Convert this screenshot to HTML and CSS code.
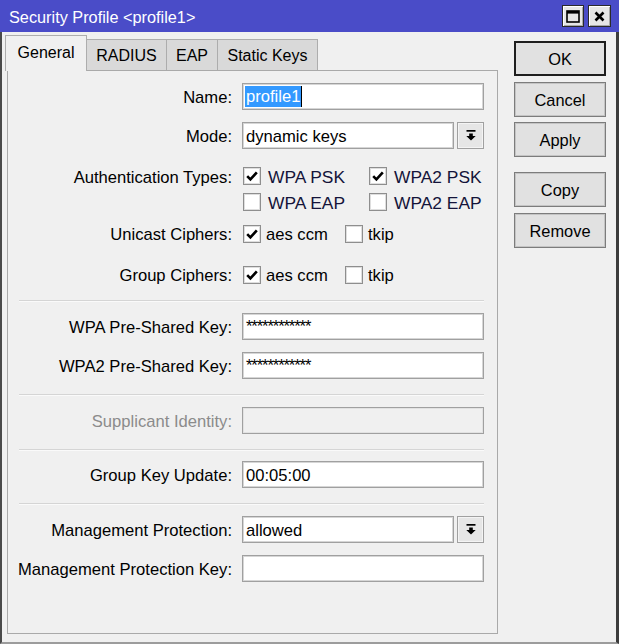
FILE: index.html
```html
<!DOCTYPE html>
<html>
<head>
<meta charset="utf-8">
<link rel="stylesheet" href="styles.css">
</head>
<body>
<div class="window">
  <div class="titlebar">
    <span class="title">Security Profile &lt;profile1&gt;</span>
    <div class="wbtns">
      <span class="wbtn"><svg width="14" height="13" viewBox="0 0 14 13"><rect x="1" y="1" width="12" height="11" fill="none" stroke="#000" stroke-width="1.6"/><rect x="1" y="1" width="12" height="2.6" fill="#000"/></svg></span>
      <span class="wbtn wide"><svg width="11" height="11" viewBox="0 0 11 11"><path d="M1.5 1.5L9.5 9.5M9.5 1.5L1.5 9.5" stroke="#000" stroke-width="2.6" fill="none"/></svg></span>
    </div>
  </div>
  <div class="frame">
    <div class="main">
      <div class="tabs">
        <div class="tab active t-general">General</div>
        <div class="tab t-radius">RADIUS</div>
        <div class="tab t-eap">EAP</div>
        <div class="tab t-static">Static Keys</div>
      </div>
      <div class="panel">
        <div class="row m12">
          <div class="lbl">Name:</div>
          <div class="input name"><span class="sel">profile1</span><span class="caret"></span></div>
        </div>
        <div class="row m12">
          <div class="lbl">Mode:</div>
          <div class="combo">
            <div class="input">dynamic keys</div>
            <div class="drop"><svg width="10" height="11" viewBox="0 0 10 11"><rect x="0.5" y="0" width="9" height="1.7" fill="#000"/><path d="M3.2 3.4h3.6v2.6h2.9L5 10.6 0.3 6h2.9z" fill="#000"/></svg></div>
          </div>
        </div>
        <div class="row auth m14">
          <div class="lbl tall">Authentication Types:</div>
          <div class="checks">
            <div class="crow">
              <div class="citem w1"><span class="cb"><svg width="14" height="14" viewBox="0 0 14 14"><path d="M2.2 7.2L5.4 10.4L11.8 3.4" stroke="#000" stroke-width="2.6" fill="none"/></svg></span><span class="ctext">WPA PSK</span></div>
              <div class="citem"><span class="cb"><svg width="14" height="14" viewBox="0 0 14 14"><path d="M2.2 7.2L5.4 10.4L11.8 3.4" stroke="#000" stroke-width="2.6" fill="none"/></svg></span><span class="ctext">WPA2 PSK</span></div>
            </div>
            <div class="crow">
              <div class="citem w1"><span class="cb"></span><span class="ctext">WPA EAP</span></div>
              <div class="citem"><span class="cb"></span><span class="ctext">WPA2 EAP</span></div>
            </div>
          </div>
        </div>
        <div class="row m5">
          <div class="lbl">Unicast Ciphers:</div>
          <div class="crow">
            <div class="citem w2 tight"><span class="cb"><svg width="14" height="14" viewBox="0 0 14 14"><path d="M2.2 7.2L5.4 10.4L11.8 3.4" stroke="#000" stroke-width="2.6" fill="none"/></svg></span><span class="ctext">aes ccm</span></div>
            <div class="citem tight"><span class="cb"></span><span class="ctext">tkip</span></div>
          </div>
        </div>
        <div class="row m14">
          <div class="lbl">Group Ciphers:</div>
          <div class="crow">
            <div class="citem w2 tight"><span class="cb"><svg width="14" height="14" viewBox="0 0 14 14"><path d="M2.2 7.2L5.4 10.4L11.8 3.4" stroke="#000" stroke-width="2.6" fill="none"/></svg></span><span class="ctext">aes ccm</span></div>
            <div class="citem tight"><span class="cb"></span><span class="ctext">tkip</span></div>
          </div>
        </div>
        <div class="sep m12"></div>
        <div class="row m11">
          <div class="lbl">WPA Pre-Shared Key:</div>
          <div class="input pw">************</div>
        </div>
        <div class="row m12">
          <div class="lbl">WPA2 Pre-Shared Key:</div>
          <div class="input pw">************</div>
        </div>
        <div class="sep m15"></div>
        <div class="row m11">
          <div class="lbl dis">Supplicant Identity:</div>
          <div class="input dis"></div>
        </div>
        <div class="sep m15"></div>
        <div class="row m10">
          <div class="lbl">Group Key Update:</div>
          <div class="input">00:05:00</div>
        </div>
        <div class="sep m15"></div>
        <div class="row m11">
          <div class="lbl">Management Protection:</div>
          <div class="combo">
            <div class="input">allowed</div>
            <div class="drop"><svg width="10" height="11" viewBox="0 0 10 11"><rect x="0.5" y="0" width="9" height="1.7" fill="#000"/><path d="M3.2 3.4h3.6v2.6h2.9L5 10.6 0.3 6h2.9z" fill="#000"/></svg></div>
          </div>
        </div>
        <div class="row m12">
          <div class="lbl">Management Protection Key:</div>
          <div class="input"></div>
        </div>
      </div>
    </div>
    <div class="side">
      <div class="btn default">OK</div>
      <div class="btn m6">Cancel</div>
      <div class="btn m5">Apply</div>
      <div class="btn m15">Copy</div>
      <div class="btn m6">Remove</div>
    </div>
  </div>
</div>
</body>
</html>
```

FILE: styles.css
```css
html, body {
  margin: 0;
  padding: 0;
  background: #f0f0f0;
}
body {
  font-family: "Liberation Sans", Arial, sans-serif;
  font-size: 16px;
  color: #000;
}
.window {
  width: 619px;
  height: 644px;
  display: flex;
  flex-direction: column;
}
.titlebar {
  height: 32px;
  flex: none;
  box-sizing: border-box;
  background: #4a4cc8;
  color: #fff;
  display: flex;
  align-items: center;
  padding: 0 8px 0 9px;
}
.title {
  font-size: 16.3px;
  margin-top: 2px;
}
.wbtns {
  margin-left: auto;
  display: flex;
  gap: 4px;
}
.wbtn {
  width: 22px;
  height: 22px;
  box-sizing: border-box;
  background: #e6e6e6;
  border: 1px solid #2a2a2a;
  box-shadow: inset 1px 1px 0 #fff, inset -1px -1px 0 #a8a8a8;
  display: flex;
  align-items: center;
  justify-content: center;
}
.wbtn.wide {
  width: 23px;
}
.frame {
  flex: 1;
  display: flex;
  box-sizing: border-box;
  border-left: 2px solid #4a4a4a;
  border-right: 3px solid #3c3c3c;
  border-bottom: 2px solid #9c9c9c;
  padding: 3px 0 0 5px;
}
.main {
  width: 491px;
  display: flex;
  flex-direction: column;
}
.tabs {
  height: 35px;
  display: flex;
  align-items: flex-end;
}
.tab {
  height: 31px;
  box-sizing: border-box;
  border: 1px solid #adadad;
  border-bottom: 0;
  background: #d9d9d9;
  display: flex;
  align-items: center;
  justify-content: center;
  padding-top: 2px;
}
.tab + .tab {
  margin-left: -1px;
}
.tab.active {
  height: 36px;
  margin-bottom: -1px;
  margin-left: -2px;
  background: #f0f0f0;
  position: relative;
  z-index: 1;
  padding-top: 0;
  padding-bottom: 2px;
}
.t-general { width: 82px; }
.t-radius { width: 81px; }
.t-eap { width: 52px; }
.t-static { width: 101px; }
.panel {
  height: 564px;
  box-sizing: border-box;
  border: 1px solid #a9a9a9;
  display: flex;
  flex-direction: column;
  font-size: 16.6px;
}
.row {
  display: grid;
  grid-template-columns: 224px 242px;
  column-gap: 10px;
  align-items: center;
  height: 27px;
}
.row.auth {
  height: 52px;
  align-items: start;
}
.lbl {
  text-align: right;
  white-space: nowrap;
  padding-top: 2px;
}
.lbl.tall {
  line-height: 26px;
}
.lbl.dis {
  color: #8b8b8b;
}
.input {
  height: 27px;
  box-sizing: border-box;
  border: 1px solid #a0a0a0;
  box-shadow: inset 0 0 0 1px #d6d6d6;
  background: #fff;
  padding: 2px 0 0 3px;
  display: flex;
  align-items: center;
  white-space: nowrap;
  overflow: hidden;
}
.input.dis {
  background: #f0f0f0;
  box-shadow: inset 0 0 0 1px #e2e2e2;
}
.input.name {
  padding: 0 0 0 2px;
}
.input.pw {
  letter-spacing: -1.1px;
  padding-top: 0;
}
.sel {
  background: #3399ff;
  color: #fff;
  padding: 1px 1px 0;
  line-height: 20px;
}
.caret {
  width: 1px;
  height: 21px;
  background: #000;
}
.combo {
  display: flex;
  gap: 3px;
}
.combo .input {
  flex: 1;
}
.drop {
  width: 27px;
  height: 27px;
  flex: none;
  box-sizing: border-box;
  border: 1px solid #a0a0a0;
  background: #e6e6e6;
  box-shadow: inset 0 0 0 1px #f4f4f4;
  display: flex;
  align-items: center;
  justify-content: center;
}
.checks {
  display: flex;
  flex-direction: column;
}
.crow {
  height: 26px;
  display: flex;
  align-items: center;
  padding-left: 1px;
}
.citem {
  display: flex;
  align-items: center;
  gap: 7px;
  white-space: nowrap;
}
.citem.tight {
  gap: 5px;
}
.citem.w1 {
  width: 126px;
}
.citem.w2 {
  width: 102px;
}
.ctext {
  padding-top: 2px;
}
.citem.w1 .ctext,
.citem.w1 + .citem .ctext {
  font-size: 17.4px;
  color: #14143a;
}
.cb {
  width: 18px;
  height: 18px;
  flex: none;
  box-sizing: border-box;
  border: 1px solid #8e8e8e;
  box-shadow: inset 0 0 0 1px #dedede;
  background: #fff;
  display: flex;
  align-items: center;
  justify-content: center;
}
.sep {
  height: 2px;
  box-sizing: border-box;
  border-top: 1px solid #d5d5d5;
  border-bottom: 1px solid #fafafa;
  margin-left: 11px;
  width: 465px;
}
.side {
  margin-left: 16px;
  width: 92px;
  display: flex;
  flex-direction: column;
  padding-top: 6px;
  font-size: 16.4px;
}
.btn {
  height: 35px;
  box-sizing: border-box;
  border: 1px solid #7c7c7c;
  box-shadow: inset 0 0 0 1px #c4c4c4;
  background: #e1e1e1;
  display: flex;
  align-items: center;
  justify-content: center;
  padding-top: 1px;
}
.btn.default {
  border: 2px solid #1e1e1e;
  box-shadow: none;
}
.m5 { margin-top: 5px; }
.m6 { margin-top: 6px; }
.m10 { margin-top: 10px; }
.m11 { margin-top: 11px; }
.m12 { margin-top: 12px; }
.m14 { margin-top: 14px; }
.m15 { margin-top: 15px; }
```
